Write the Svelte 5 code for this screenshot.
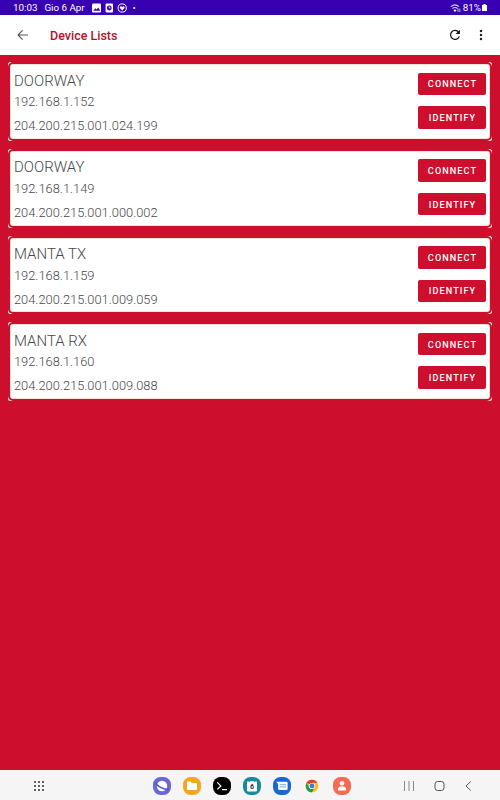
<script>
  const devices = [
    { name: 'DOORWAY', ip: '192.168.1.152', uid: '204.200.215.001.024.199' },
    { name: 'DOORWAY', ip: '192.168.1.149', uid: '204.200.215.001.000.002' },
    { name: 'MANTA TX', ip: '192.168.1.159', uid: '204.200.215.001.009.059' },
    { name: 'MANTA RX', ip: '192.168.1.160', uid: '204.200.215.001.009.088' }
  ];

  const dots = [0, 1, 2, 3, 4, 5, 6, 7, 8];
</script>

<div class="screen">
  <div class="status">
    <span class="clock">10:03</span>
    <span class="date">Gio 6 Apr</span>
    <svg class="notices" width="46" height="10" viewBox="0 0 46 10">
      <rect x="0" y="0.5" width="9" height="9" rx="1.2" fill="#fff" />
      <path d="M1.3 7.8 3.3 5.2l1.4 1.4 1.6-2.2 1.9 3.4z" fill="#3700b3" />
      <rect x="13.6" y="0.5" width="7.4" height="9" rx="1" fill="#fff" />
      <circle cx="17.3" cy="5" r="2.4" fill="#3700b3" />
      <path d="M17.3 3.4V5h1.3" stroke="#fff" stroke-width="0.8" fill="none" />
      <circle cx="30.2" cy="5" r="4.1" fill="none" stroke="#fff" stroke-width="1" />
      <path d="M30.2 7.4 27.9 5.1q-.5-1.7 1-1.8.8 0 1.3.7.5-.7 1.3-.7 1.5.1 1 1.8z" fill="#fff" />
      <circle cx="42.2" cy="5" r="1.1" fill="#fff" />
    </svg>
    <span class="grow"></span>
    <svg width="11" height="10" viewBox="0 0 11 10" fill="none" stroke="#d9ccf3" stroke-width="1.1">
      <path d="M1 3.6Q5 .2 9 3.6M2.4 5.5Q5 3.4 7.6 5.5" />
      <path d="M5 9 3.4 7.1Q5 6 6.6 7.1z" fill="#fff" stroke="none" />
      <path d="M8 8.9V5.6M9.8 5.6v3.3" stroke-width="0.9" />
    </svg>
    <span class="charge">81%</span>
    <svg width="5" height="8" viewBox="0 0 5 8">
      <path d="M1.5 0h2v1H5v6H0V1h1.5z" fill="#fff" />
    </svg>
  </div>

  <header>
    <svg width="12" height="12" viewBox="0 0 12 12" fill="none" stroke="#555" stroke-width="1.1">
      <path d="M11 6H1.4M5.6 1.4 1 6l4.6 4.6" />
    </svg>
    <h1>Device Lists</h1>
    <span class="grow"></span>
    <svg class="refresh" width="12" height="12" viewBox="0 0 12 12">
      <path d="M9.6 3.2A4.5 4.5 0 1 0 10.3 7.4" fill="none" stroke="#111" stroke-width="1.2" />
      <path d="M10.9 0.8V5.1H6.6z" fill="#111" />
    </svg>
    <svg width="4" height="12" viewBox="0 0 4 12" fill="#222">
      <circle cx="2" cy="2" r="1.25" />
      <circle cx="2" cy="6" r="1.25" />
      <circle cx="2" cy="10" r="1.25" />
    </svg>
  </header>

  <main>
    {#each devices as device}
      <div class="card">
        <div class="frame">
          <div class="info">
            <h2>{device.name}</h2>
            <p class="ip">{device.ip}</p>
            <p class="uid">{device.uid}</p>
          </div>
          <div class="actions">
            <button>CONNECT</button>
            <button>IDENTIFY</button>
          </div>
        </div>
      </div>
    {/each}
  </main>

  <nav>
    <svg class="drawer" width="12" height="12" viewBox="0 0 12 12" fill="#222">
      {#each dots as i}
        <circle cx={2 + (i % 3) * 4} cy={2 + Math.floor(i / 3) * 4} r="0.95" />
      {/each}
    </svg>

    <div class="apps">
      <!-- browser -->
      <svg viewBox="0 0 18 18">
        <rect width="18" height="18" rx="7.5" fill="#6a68d8" />
        <circle cx="9" cy="9" r="5.2" fill="#fff" />
        <path d="M3.2 5.8c-1.2 2.4 10.2 8.4 12.6 6" fill="none" stroke="#5450be" stroke-width="1.5" />
      </svg>
      <!-- files -->
      <svg viewBox="0 0 18 18">
        <rect width="18" height="18" rx="7.5" fill="#f2a81c" />
        <path d="M4 5.3q0-.8.8-.8h2.7l1.3 1.4h4.4q.8 0 .8.8v5.5q0 .8-.8.8H4.8q-.8 0-.8-.8z" fill="#fff" />
      </svg>
      <!-- terminal -->
      <svg viewBox="0 0 18 18">
        <rect width="18" height="18" rx="7.5" fill="#000" />
        <path d="M4.3 5.4 7.8 8.9 4.3 12.4M9 12.7h5" fill="none" stroke="#fff" stroke-width="1.2" />
      </svg>
      <!-- calendar -->
      <svg viewBox="0 0 18 18">
        <rect width="18" height="18" rx="7.5" fill="#178a9b" />
        <rect x="4" y="4.2" width="10" height="10.2" rx="1.2" fill="#fff" />
        <path d="M6.2 3.4v1.6M11.8 3.4v1.6" stroke="#178a9b" stroke-width="1" />
        <text x="9" y="12.4" text-anchor="middle">6</text>
      </svg>
      <!-- messages -->
      <svg viewBox="0 0 18 18">
        <rect width="18" height="18" rx="7.5" fill="#1967d2" />
        <path d="M3.2 4.8h10.2q1.2 0 1.2 1.2v5.8q0 1.2-1.2 1.2H6.3q-1.2 0-1.2-1.2V7z" fill="#fff" />
        <path d="M6.7 7.7h6.2M6.7 9.9h6.2" stroke="#6ba0ea" stroke-width="0.9" />
      </svg>
      <!-- chrome -->
      <svg viewBox="0 0 18 18">
        <circle cx="9" cy="9" r="6.3" fill="#fbc116" />
        <path d="M9 9 3.54 5.85A6.3 6.3 0 0 1 14.46 5.85H9z" fill="#e33b2e" />
        <path d="M3.54 5.85A6.3 6.3 0 0 0 9 15.3L11.7 10.6 9 9 6.3 10.6z" fill="#269a4b" />
        <circle cx="9" cy="9" r="3.1" fill="#fff" />
        <circle cx="9" cy="9" r="2.4" fill="#3979e8" />
      </svg>
      <!-- contacts -->
      <svg viewBox="0 0 18 18">
        <rect width="18" height="18" rx="7.5" fill="#f96a55" />
        <circle cx="9" cy="6.3" r="2.3" fill="#fff" />
        <path d="M4.8 12.8q0-3.6 4.2-3.6t4.2 3.6q0 .8-.8.8H5.6q-.8 0-.8-.8z" fill="#fff" />
      </svg>
    </div>

    <div class="system">
      <svg width="10" height="12" viewBox="0 0 10 12" stroke="#888" stroke-width="1">
        <path d="M0.5 1v10M5 1v10M9.5 1v10" />
      </svg>
      <svg width="11" height="12" viewBox="0 0 11 12" fill="none" stroke="#555">
        <rect x="1" y="1.5" width="9" height="9" rx="2.6" />
      </svg>
      <svg width="7" height="12" viewBox="0 0 7 12" fill="none" stroke="#555">
        <path d="M5.8 1.5 1 6l4.8 4.5" />
      </svg>
    </div>
  </nav>
</div>

<style>
  :global(body) {
    margin: 0;
  }

  .screen {
    display: flex;
    flex-direction: column;
    width: 500px;
    height: 800px;
    background: #cd0e2c;
    font-family: Roboto, sans-serif;
  }

  .grow {
    flex: 1;
  }

  .status {
    display: flex;
    align-items: center;
    box-sizing: border-box;
    height: 15px;
    padding: 0 13px;
    background: #3700b3;
    color: #fff;
    font-size: 9.8px;
    line-height: 15px;
  }

  .date {
    margin-left: 7px;
  }

  .notices {
    margin-left: 7px;
  }

  .charge {
    margin: 0 1px 0 2px;
  }

  header {
    display: flex;
    align-items: center;
    box-sizing: border-box;
    height: 40px;
    padding: 0 17px;
    background: #fff;
  }

  h1 {
    margin: 0 0 0 21px;
    color: #b0122a;
    font-size: 12.5px;
    font-weight: 500;
  }

  .refresh {
    margin-right: 18px;
  }

  main {
    display: flex;
    flex: 1;
    flex-direction: column;
    gap: 8px;
    padding: 7.4px 8px 0;
  }

  /* white shows only behind the rounded corners of the frame */
  .card {
    height: 78.7px;
    border-radius: 2.5px;
    background: #fff;
  }

  .frame {
    display: flex;
    justify-content: space-between;
    box-sizing: border-box;
    height: 100%;
    padding: 0 4px;
    border: 2px solid #cd0e2c;
    border-radius: 5px;
    background: #fff;
    box-shadow: inset 0 0 0 0.6px #f7c9a8;
  }

  .info {
    color: #484848;
    font-weight: 300;
  }

  h2,
  p {
    margin: 0;
    font-weight: inherit;
  }

  h2 {
    padding-top: 7.4px;
    font-size: 15px;
    line-height: 18.6px;
  }

  .ip,
  .uid {
    font-size: 12.85px;
    line-height: 24px;
  }

  .actions {
    display: flex;
    flex-direction: column;
    gap: 11px;
    padding-top: 8.3px;
  }

  button {
    width: 68px;
    height: 22.5px;
    padding: 1px 0 0 1px;
    border: 0;
    border-radius: 2px;
    background: #cd0e2c;
    color: #fff;
    font: 500 9.1px Roboto, sans-serif;
    letter-spacing: 1.1px;
  }

  nav {
    display: grid;
    grid-template-columns: 1fr auto 1fr;
    align-items: center;
    box-sizing: border-box;
    height: 30px;
    padding: 1px 28.5px 0 32.5px;
    background: #f5f5f5;
  }

  .apps {
    display: flex;
    gap: 12px;
  }

  .apps svg {
    width: 18px;
    height: 18px;
  }

  .apps text {
    fill: #234;
    font-size: 7px;
    font-weight: 700;
  }

  .system {
    display: flex;
    justify-content: flex-end;
    gap: 20px;
  }
</style>
